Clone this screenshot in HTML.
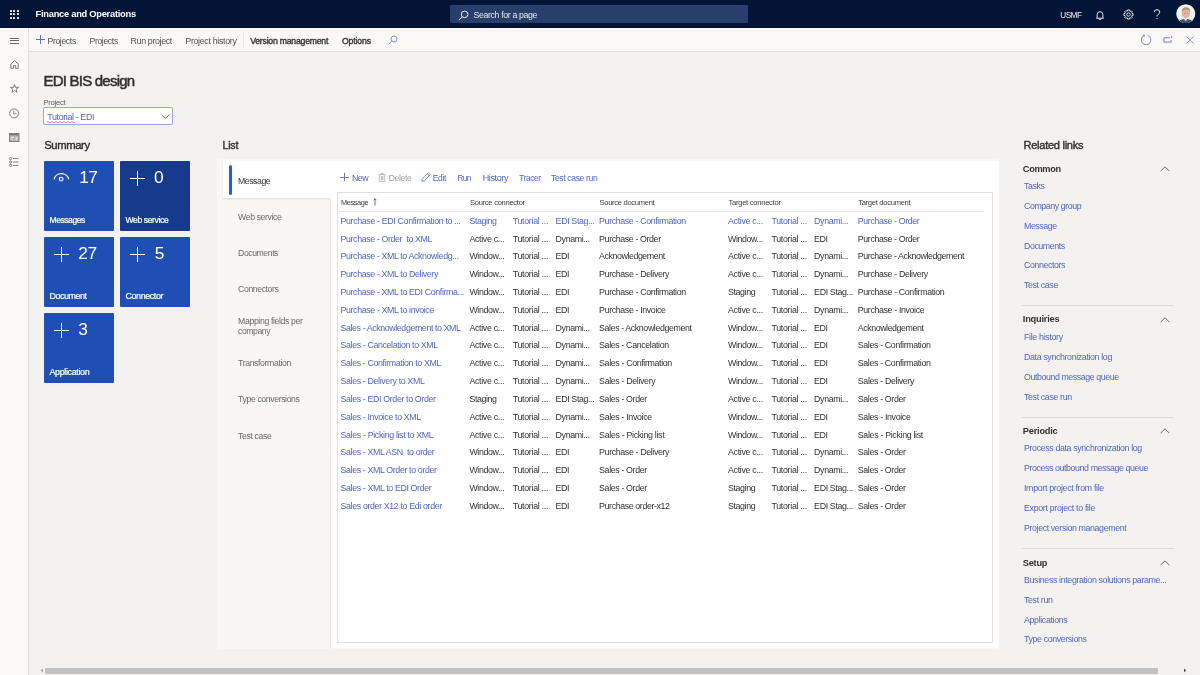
<!DOCTYPE html>
<html><head><meta charset="utf-8"><title>EDI BIS design</title>
<style>
html,body{margin:0;padding:0;width:1200px;height:675px;overflow:hidden;background:#f3f2f1;}
body{position:relative;font-family:"Liberation Sans",sans-serif;}
.t{position:absolute;white-space:nowrap;line-height:1;}
#w{position:absolute;left:0;top:0;width:1200px;height:675px;overflow:hidden;will-change:transform;}
.r{position:absolute;}
</style></head><body>
<div id="w">
<div class="r" style="left:0px;top:0px;width:1200px;height:28px;background:#021536;"></div>
<div class="r" style="left:9.8px;top:9.8px;width:2.2px;height:2.2px;background:#ffffff;border-radius:0.4px;"></div>
<div class="r" style="left:9.8px;top:13.200000000000001px;width:2.2px;height:2.2px;background:#ffffff;border-radius:0.4px;"></div>
<div class="r" style="left:9.8px;top:16.6px;width:2.2px;height:2.2px;background:#ffffff;border-radius:0.4px;"></div>
<div class="r" style="left:13.200000000000001px;top:9.8px;width:2.2px;height:2.2px;background:#ffffff;border-radius:0.4px;"></div>
<div class="r" style="left:13.200000000000001px;top:13.200000000000001px;width:2.2px;height:2.2px;background:#ffffff;border-radius:0.4px;"></div>
<div class="r" style="left:13.200000000000001px;top:16.6px;width:2.2px;height:2.2px;background:#ffffff;border-radius:0.4px;"></div>
<div class="r" style="left:16.6px;top:9.8px;width:2.2px;height:2.2px;background:#ffffff;border-radius:0.4px;"></div>
<div class="r" style="left:16.6px;top:13.200000000000001px;width:2.2px;height:2.2px;background:#ffffff;border-radius:0.4px;"></div>
<div class="r" style="left:16.6px;top:16.6px;width:2.2px;height:2.2px;background:#ffffff;border-radius:0.4px;"></div>
<div class="t" style="left:35.60px;top:10px;font-size:9.328px;color:#ffffff;font-weight:700;letter-spacing:-0.267px;">Finance and Operations</div>
<div class="r" style="left:450px;top:5px;width:298px;height:18px;background:#283f6b;border-radius:1px;"></div>
<svg class="r" style="left:458px;top:9.5px" width="11" height="11" viewBox="0 0 11 11"><circle cx="6.6" cy="4.4" r="3.3" fill="none" stroke="#e8edf5" stroke-width="1"/><line x1="4.2" y1="6.8" x2="0.8" y2="10.2" stroke="#e8edf5" stroke-width="1"/></svg>
<div class="t" style="left:473.50px;top:11px;font-size:8.800px;color:#e3e8f0;font-weight:400;letter-spacing:-0.372px;">Search for a page</div>
<div class="t" style="left:1060.30px;top:12px;font-size:8.195px;color:#f0f2f6;font-weight:400;letter-spacing:-0.531px;">USMF</div>
<svg class="r" style="left:1095px;top:9.5px" width="10" height="10" viewBox="0 0 10 10"><path d="M2.2 7.3 V4.5 A2.8 2.8 0 0 1 7.8 4.5 V7.3 L8.6 8.2 H1.4 Z" fill="none" stroke="#fff" stroke-width="0.9" stroke-linejoin="round"/><path d="M4 8.8 A1 1 0 0 0 6 8.8" fill="none" stroke="#fff" stroke-width="0.9"/></svg>
<svg class="r" style="left:1123px;top:8.8px" width="11" height="11" viewBox="0 0 11 11"><circle cx="5.5" cy="5.5" r="1.7" fill="none" stroke="#fff" stroke-width="0.85"/><path d="M8.94 4.45 L10.12 4.64 L10.12 6.36 L8.94 6.55 L8.68 7.19 L9.37 8.16 L8.16 9.37 L7.19 8.68 L6.55 8.94 L6.36 10.12 L4.64 10.12 L4.45 8.94 L3.81 8.68 L2.84 9.37 L1.63 8.16 L2.32 7.19 L2.06 6.55 L0.88 6.36 L0.88 4.64 L2.06 4.45 L2.32 3.81 L1.63 2.84 L2.84 1.63 L3.81 2.32 L4.45 2.06 L4.64 0.88 L6.36 0.88 L6.55 2.06 L7.19 2.32 L8.16 1.63 L9.37 2.84 L8.68 3.81 Z" fill="none" stroke="#fff" stroke-width="0.85" stroke-linejoin="round"/></svg>
<svg class="r" style="left:1153px;top:9px" width="8" height="11" viewBox="0 0 8 11"><path d="M1.2 3.2 Q1.2 0.7 4 0.7 Q6.8 0.7 6.8 3.1 Q6.8 4.6 5 5.4 Q4 5.9 4 7.4" fill="none" stroke="#fff" stroke-width="0.9"/><circle cx="4" cy="9.6" r="0.6" fill="#fff"/></svg>
<svg class="r" style="left:1176px;top:3.5px" width="19.5" height="19.5" viewBox="0 0 20 20"><defs><clipPath id="av"><circle cx="10" cy="10" r="9.8"/></clipPath></defs><circle cx="10" cy="10" r="9.8" fill="#f2f2f2"/><g clip-path="url(#av)"><path d="M2 20 Q3 15.5 10 15 Q17 15.5 18 20Z" fill="#3d4d6e"/><path d="M8.2 15.2 L10 18 L11.8 15.2Z" fill="#ffffff"/><ellipse cx="10.2" cy="9.3" rx="4.3" ry="5.2" fill="#e2b49c"/><path d="M5.8 8.2 Q5.8 3.2 10.2 3.3 Q14.6 3.2 14.6 8.2 Q13.5 5.6 10.2 5.8 Q7 5.6 5.8 8.2Z" fill="#b89064"/><ellipse cx="8.6" cy="9.6" rx="0.5" ry="0.4" fill="#7a5a4a"/><ellipse cx="11.8" cy="9.6" rx="0.5" ry="0.4" fill="#7a5a4a"/></g></svg>
<div class="r" style="left:29px;top:28px;width:1171px;height:23px;background:#faf9f8;"></div>
<div class="r" style="left:29px;top:51px;width:1171px;height:1px;background:#e1dfdd;"></div>
<div class="r" style="left:35.5px;top:39.2px;width:9.2px;height:0.8px;background:#5d6fc8;"></div>
<div class="r" style="left:39.7px;top:35px;width:0.8px;height:9.2px;background:#5d6fc8;"></div>
<div class="t" style="left:47.50px;top:37px;font-size:8.635px;color:#4f4d4b;font-weight:400;letter-spacing:-0.352px;">Projects</div>
<div class="t" style="left:89.50px;top:37px;font-size:8.635px;color:#4f4d4b;font-weight:400;letter-spacing:-0.352px;">Projects</div>
<div class="t" style="left:130.50px;top:37px;font-size:8.910px;color:#4f4d4b;font-weight:400;letter-spacing:-0.378px;">Run project</div>
<div class="t" style="left:185.30px;top:37px;font-size:8.910px;color:#4f4d4b;font-weight:400;letter-spacing:-0.344px;">Project history</div>
<div class="r" style="left:243px;top:31px;width:1px;height:17px;background:#edebe9;"></div>
<div class="t" style="left:250.20px;top:37px;font-size:8.662px;color:#323130;font-weight:400;letter-spacing:-0.214px;-webkit-text-stroke:0.35px #323130;">Version management</div>
<div class="t" style="left:342.00px;top:37px;font-size:8.652px;color:#323130;font-weight:400;letter-spacing:-0.129px;-webkit-text-stroke:0.35px #323130;">Options</div>
<svg class="r" style="left:387.5px;top:34.5px" width="10" height="10" viewBox="0 0 10 10"><circle cx="6" cy="4" r="3" fill="none" stroke="#7580c8" stroke-width="0.85"/><line x1="3.8" y1="6.2" x2="0.7" y2="9.3" stroke="#7580c8" stroke-width="0.85"/></svg>
<svg class="r" style="left:1140px;top:33.5px" width="12" height="12" viewBox="0 0 12 12"><path d="M4.3 1.4 A4.8 4.8 0 1 0 7.6 1.3" fill="none" stroke="#6a72b4" stroke-width="0.85"/><path d="M2.7 0.9 L4.4 1.3 L4.0 3.0" fill="none" stroke="#6a72b4" stroke-width="0.85"/></svg>
<svg class="r" style="left:1162.5px;top:35.5px" width="10" height="7" viewBox="0 0 10 7"><path d="M6.8 1.8 H0.9 V6.1 H8.1 V4" fill="none" stroke="#6a72b4" stroke-width="0.9"/><circle cx="8.6" cy="1.1" r="0.8" fill="#6a72b4"/></svg>
<svg class="r" style="left:1185.5px;top:35.8px" width="8" height="8" viewBox="0 0 8 8"><path d="M0.5 0.5 L7.5 7.5 M7.5 0.5 L0.5 7.5" fill="none" stroke="#6a72b4" stroke-width="0.8"/></svg>
<div class="r" style="left:0px;top:28px;width:28px;height:647px;background:#faf9f8;"></div>
<div class="r" style="left:28px;top:28px;width:1px;height:647px;background:#e1dfdd;"></div>
<div class="r" style="left:9.5px;top:37.6px;width:9.5px;height:0.8px;background:#6b6967;"></div>
<div class="r" style="left:9.5px;top:40.2px;width:9.5px;height:0.8px;background:#6b6967;"></div>
<div class="r" style="left:9.5px;top:42.8px;width:9.5px;height:0.8px;background:#6b6967;"></div>
<svg class="r" style="left:9.5px;top:59.5px" width="9" height="9" viewBox="0 0 9 9"><path d="M0.8 4 L4.5 0.7 L8.2 4 V8.3 H5.6 V5.6 H3.4 V8.3 H0.8 Z" fill="none" stroke="#6b6967" stroke-width="0.85" stroke-linejoin="round"/></svg>
<svg class="r" style="left:9.5px;top:84px" width="9" height="9" viewBox="0 0 9 9"><path d="M4.5 0.5 L5.5 3.3 L8.5 3.4 L6.1 5.2 L7 8.3 L4.5 6.5 L2 8.3 L2.9 5.2 L0.5 3.4 L3.5 3.3 Z" fill="none" stroke="#6b6967" stroke-width="0.85" stroke-linejoin="round"/></svg>
<svg class="r" style="left:9px;top:107.5px" width="11" height="11" viewBox="0 0 11 11"><circle cx="5.2" cy="5.4" r="4.5" fill="none" stroke="#6b6967" stroke-width="0.85"/><path d="M4.8 2.8 V5.8 H7.3" fill="none" stroke="#6b6967" stroke-width="0.85"/></svg>
<svg class="r" style="left:9px;top:133px" width="10.5" height="9" viewBox="0 0 10.5 9"><rect x="0.5" y="0.5" width="9.5" height="8" fill="#b4b2b0" stroke="#7f7d7b" stroke-width="0.9"/><rect x="0.5" y="0.5" width="9.5" height="1.8" fill="#7a7876"/><rect x="2" y="3.8" width="3" height="1.2" fill="#e8e6e4"/><rect x="2" y="5.8" width="2" height="1" fill="#e8e6e4"/><rect x="6.5" y="3.8" width="2" height="3.5" fill="#e8e6e4"/></svg>
<svg class="r" style="left:9px;top:157px" width="10" height="10" viewBox="0 0 10 10"><circle cx="1.6" cy="1.6" r="1.1" fill="none" stroke="#6b6967" stroke-width="0.8"/><circle cx="1.6" cy="5" r="1.1" fill="none" stroke="#6b6967" stroke-width="0.8"/><circle cx="1.6" cy="8.4" r="1.1" fill="none" stroke="#6b6967" stroke-width="0.8"/><path d="M4 1.6 H9.5 M4 5 H9.5 M4 8.4 H9.5" stroke="#6b6967" stroke-width="0.8"/></svg>
<div class="r" style="left:29px;top:52px;width:1171px;height:623px;background:#f3f2f1;"></div>
<div class="t" style="left:43.50px;top:73px;font-size:15.008px;color:#323130;font-weight:400;letter-spacing:-0.779px;-webkit-text-stroke:0.5px #323130;">EDI BIS design</div>
<div class="t" style="left:43.50px;top:99px;font-size:7.700px;color:#605e5c;font-weight:400;letter-spacing:-0.306px;">Project</div>
<div class="r" style="left:43px;top:107px;width:130px;height:17.5px;background:#ffffff;box-sizing:border-box;border:1px solid #93a8da;border-radius:2px;"></div>
<div class="t" style="left:47.25px;top:113px;font-size:8.960px;color:#5066ba;font-weight:400;letter-spacing:-0.398px;">Tutorial - EDI</div>
<svg class="r" style="left:47px;top:121px" width="28" height="2" viewBox="0 0 28 2"><path d="M0 1.2 Q1 0 2 1.2 T4 1.2 T6 1.2 T8 1.2 T10 1.2 T12 1.2 T14 1.2 T16 1.2 T18 1.2 T20 1.2 T22 1.2 T24 1.2 T26 1.2 T28 1.2" fill="none" stroke="#e05050" stroke-width="0.7"/></svg>
<svg class="r" style="left:160.8px;top:114px" width="9" height="5" viewBox="0 0 9 5"><path d="M0.5 0.6 L4.5 4.4 L8.5 0.6" fill="none" stroke="#605e5c" stroke-width="0.9"/></svg>
<div class="t" style="left:44.20px;top:140px;font-size:11.289px;color:#323130;font-weight:400;letter-spacing:-0.382px;-webkit-text-stroke:0.4px #323130;">Summary</div>
<div class="r" style="left:44px;top:161px;width:70px;height:70px;background:#1f4fb4;border-radius:1px;"></div>
<svg class="r" style="left:53px;top:171.2px" width="17" height="11" viewBox="0 0 17 11"><path d="M1.2 7.9 A7.3 6.3 0 0 1 15.6 7.9" fill="none" stroke="#fff" stroke-width="1.15" stroke-linecap="round"/><circle cx="8.1" cy="8.1" r="1.85" fill="none" stroke="#fff" stroke-width="1.15"/></svg>
<div class="t" style="left:79.20px;top:169px;font-size:17.325px;color:#ffffff;font-weight:400;letter-spacing:-0.453px;">17</div>
<div class="t" style="left:49.50px;top:216px;font-size:8.525px;color:#ffffff;font-weight:400;letter-spacing:-0.436px;-webkit-text-stroke:0.2px #ffffff;">Messages</div>
<div class="r" style="left:120px;top:161px;width:70px;height:70px;background:#163b8b;border-radius:1px;"></div>
<div class="r" style="left:130px;top:178.3px;width:15px;height:1.1px;background:#ffffff;"></div>
<div class="r" style="left:136.95px;top:170.5px;width:1.1px;height:15.5px;background:#ffffff;"></div>
<div class="t" style="left:153.90px;top:169px;font-size:17.325px;color:#ffffff;font-weight:400;letter-spacing:-0.453px;">0</div>
<div class="t" style="left:125.50px;top:216px;font-size:8.580px;color:#ffffff;font-weight:400;letter-spacing:-0.389px;-webkit-text-stroke:0.2px #ffffff;">Web service</div>
<div class="r" style="left:44px;top:237px;width:70px;height:70px;background:#1f4fb4;border-radius:1px;"></div>
<div class="r" style="left:54px;top:254.3px;width:15px;height:1.1px;background:#ffffff;"></div>
<div class="r" style="left:60.95px;top:246.5px;width:1.1px;height:15.5px;background:#ffffff;"></div>
<div class="t" style="left:78.30px;top:245px;font-size:17.325px;color:#ffffff;font-weight:400;letter-spacing:-0.453px;">27</div>
<div class="t" style="left:49.50px;top:292px;font-size:8.965px;color:#ffffff;font-weight:400;letter-spacing:-0.473px;-webkit-text-stroke:0.2px #ffffff;">Document</div>
<div class="r" style="left:120px;top:237px;width:70px;height:70px;background:#1f4fb4;border-radius:1px;"></div>
<div class="r" style="left:130px;top:254.3px;width:15px;height:1.1px;background:#ffffff;"></div>
<div class="r" style="left:136.95px;top:246.5px;width:1.1px;height:15.5px;background:#ffffff;"></div>
<div class="t" style="left:154.80px;top:245px;font-size:17.325px;color:#ffffff;font-weight:400;letter-spacing:-0.453px;">5</div>
<div class="t" style="left:125.50px;top:292px;font-size:8.965px;color:#ffffff;font-weight:400;letter-spacing:-0.424px;-webkit-text-stroke:0.2px #ffffff;">Connector</div>
<div class="r" style="left:44px;top:313px;width:70px;height:70px;background:#1f4fb4;border-radius:1px;"></div>
<div class="r" style="left:54px;top:330.3px;width:15px;height:1.1px;background:#ffffff;"></div>
<div class="r" style="left:60.95px;top:322.5px;width:1.1px;height:15.5px;background:#ffffff;"></div>
<div class="t" style="left:78.30px;top:321px;font-size:17.325px;color:#ffffff;font-weight:400;letter-spacing:-0.453px;">3</div>
<div class="t" style="left:49.50px;top:368px;font-size:8.965px;color:#ffffff;font-weight:400;letter-spacing:-0.369px;-webkit-text-stroke:0.2px #ffffff;">Application</div>
<div class="t" style="left:222.60px;top:140px;font-size:10.600px;color:#323130;font-weight:400;letter-spacing:-0.234px;-webkit-text-stroke:0.4px #323130;">List</div>
<div class="r" style="left:217px;top:159px;width:782px;height:490px;background:#f8f7f6;"></div>
<div class="r" style="left:223px;top:161px;width:108px;height:37px;background:#ffffff;box-shadow:0 1px 1.5px rgba(0,0,0,0.12);"></div>
<div class="r" style="left:331px;top:161px;width:668px;height:487px;background:#ffffff;"></div>
<div class="r" style="left:330px;top:198px;width:1px;height:451px;background:#e9e8e6;"></div>
<div class="r" style="left:229px;top:165px;width:3.2px;height:30px;background:#2160d0;border-radius:1.6px;"></div>
<div class="t" style="left:238.10px;top:177px;font-size:8.690px;color:#323130;font-weight:400;letter-spacing:-0.451px;">Message</div>
<div class="t" style="left:238.10px;top:213px;font-size:8.690px;color:#6b6967;font-weight:400;letter-spacing:-0.389px;">Web service</div>
<div class="t" style="left:238.10px;top:249px;font-size:8.690px;color:#6b6967;font-weight:400;letter-spacing:-0.438px;">Documents</div>
<div class="t" style="left:238.10px;top:285px;font-size:8.690px;color:#6b6967;font-weight:400;letter-spacing:-0.400px;">Connectors</div>
<div class="t" style="left:238.10px;top:359px;font-size:8.690px;color:#6b6967;font-weight:400;letter-spacing:-0.373px;">Transformation</div>
<div class="t" style="left:238.10px;top:395px;font-size:8.690px;color:#6b6967;font-weight:400;letter-spacing:-0.380px;">Type conversions</div>
<div class="t" style="left:238.10px;top:432px;font-size:8.690px;color:#6b6967;font-weight:400;letter-spacing:-0.366px;">Test case</div>
<div class="t" style="left:238.10px;top:317px;font-size:8.690px;color:#6b6967;font-weight:400;letter-spacing:-0.355px;">Mapping fields per</div>
<div class="t" style="left:238.10px;top:327px;font-size:8.690px;color:#6b6967;font-weight:400;letter-spacing:-0.451px;">company</div>
<div class="r" style="left:340.3px;top:176.6px;width:8.4px;height:0.8px;background:#6f78c0;"></div>
<div class="r" style="left:344.1px;top:172.6px;width:0.8px;height:8.6px;background:#6f78c0;"></div>
<div class="t" style="left:352.00px;top:174px;font-size:8.800px;color:#5066ba;font-weight:400;letter-spacing:-0.531px;">New</div>
<svg class="r" style="left:377.5px;top:172.5px" width="8" height="9" viewBox="0 0 8 9"><path d="M1.3 1.8 V8.4 H6.7 V1.8 M0.4 1.5 H7.6 M2.8 1.4 V0.5 H5.2 V1.4" fill="none" stroke="#b5b3b1" stroke-width="0.8"/><rect x="2.6" y="3" width="2.8" height="4.2" fill="#c8c6c4"/></svg>
<div class="t" style="left:388.70px;top:174px;font-size:8.690px;color:#a19f9d;font-weight:400;letter-spacing:-0.378px;">Delete</div>
<svg class="r" style="left:420.5px;top:172px" width="10" height="10" viewBox="0 0 10 10"><path d="M0.8 9.2 L1.3 6.6 L7.2 0.7 L9.3 2.8 L3.4 8.7 Z M6.2 1.7 L8.3 3.8" fill="none" stroke="#5d6fc8" stroke-width="0.8" stroke-linejoin="round"/></svg>
<div class="t" style="left:432.70px;top:174px;font-size:8.525px;color:#5066ba;font-weight:400;letter-spacing:-0.332px;">Edit</div>
<div class="t" style="left:457.50px;top:175px;font-size:8.176px;color:#5066ba;font-weight:400;letter-spacing:-0.526px;">Run</div>
<div class="t" style="left:482.70px;top:174px;font-size:9.020px;color:#5066ba;font-weight:400;letter-spacing:-0.368px;">History</div>
<div class="t" style="left:519.30px;top:174px;font-size:8.400px;color:#5066ba;font-weight:400;letter-spacing:-0.417px;">Tracer</div>
<div class="t" style="left:551.00px;top:174px;font-size:8.580px;color:#5066ba;font-weight:400;letter-spacing:-0.358px;">Test case run</div>
<div class="r" style="left:337px;top:192px;width:656px;height:451px;background:#ffffff;box-sizing:border-box;border:1px solid #e1dfdd;"></div>
<div class="r" style="left:338px;top:211px;width:646px;height:1px;background:#e6e4e2;"></div>
<div class="t" style="left:341.00px;top:199px;font-size:7.370px;color:#3b3a39;font-weight:400;letter-spacing:-0.391px;">Message</div>
<svg class="r" style="left:372.5px;top:197.5px" width="4" height="8" viewBox="0 0 4 8"><path d="M2 0.8 V7.5 M0.6 2.2 L2 0.8 L3.4 2.2" fill="none" stroke="#323130" stroke-width="0.7"/></svg>
<div class="t" style="left:470.00px;top:199px;font-size:7.560px;color:#3b3a39;font-weight:400;letter-spacing:-0.268px;">Source connector</div>
<div class="t" style="left:599.50px;top:199px;font-size:7.560px;color:#3b3a39;font-weight:400;letter-spacing:-0.285px;">Source document</div>
<div class="t" style="left:728.50px;top:199px;font-size:7.560px;color:#3b3a39;font-weight:400;letter-spacing:-0.254px;">Target connector</div>
<div class="t" style="left:858.20px;top:199px;font-size:7.560px;color:#3b3a39;font-weight:400;letter-spacing:-0.271px;">Target document</div>
<div class="t" style="left:340.50px;top:217px;font-size:8.844px;color:#5066ba;font-weight:400;letter-spacing:-0.350px;">Purchase - EDI Confirmation to ...</div>
<div class="t" style="left:469.40px;top:217px;font-size:8.844px;color:#5066ba;font-weight:400;letter-spacing:-0.386px;">Staging</div>
<div class="t" style="left:512.70px;top:217px;font-size:8.844px;color:#5066ba;font-weight:400;letter-spacing:-0.292px;">Tutorial ...</div>
<div class="t" style="left:555.60px;top:217px;font-size:8.844px;color:#5066ba;font-weight:400;letter-spacing:-0.351px;">EDI Stag...</div>
<div class="t" style="left:599.10px;top:217px;font-size:8.844px;color:#5066ba;font-weight:400;letter-spacing:-0.373px;">Purchase - Confirmation</div>
<div class="t" style="left:728.00px;top:217px;font-size:8.844px;color:#5066ba;font-weight:400;letter-spacing:-0.314px;">Active c...</div>
<div class="t" style="left:771.40px;top:217px;font-size:8.844px;color:#5066ba;font-weight:400;letter-spacing:-0.292px;">Tutorial ...</div>
<div class="t" style="left:814.10px;top:217px;font-size:8.844px;color:#5066ba;font-weight:400;letter-spacing:-0.375px;">Dynami...</div>
<div class="t" style="left:857.80px;top:217px;font-size:8.844px;color:#5066ba;font-weight:400;letter-spacing:-0.382px;">Purchase - Order</div>
<div class="t" style="left:340.50px;top:235px;font-size:8.844px;color:#5066ba;font-weight:400;letter-spacing:-0.378px;">Purchase - Order&nbsp; to XML</div>
<div class="t" style="left:469.40px;top:235px;font-size:8.844px;color:#323130;font-weight:400;letter-spacing:-0.314px;">Active c...</div>
<div class="t" style="left:512.70px;top:235px;font-size:8.844px;color:#323130;font-weight:400;letter-spacing:-0.292px;">Tutorial ...</div>
<div class="t" style="left:555.60px;top:235px;font-size:8.844px;color:#323130;font-weight:400;letter-spacing:-0.375px;">Dynami...</div>
<div class="t" style="left:599.10px;top:235px;font-size:8.844px;color:#323130;font-weight:400;letter-spacing:-0.382px;">Purchase - Order</div>
<div class="t" style="left:728.00px;top:235px;font-size:8.844px;color:#323130;font-weight:400;letter-spacing:-0.384px;">Window...</div>
<div class="t" style="left:771.40px;top:235px;font-size:8.844px;color:#323130;font-weight:400;letter-spacing:-0.292px;">Tutorial ...</div>
<div class="t" style="left:814.10px;top:235px;font-size:8.844px;color:#323130;font-weight:400;letter-spacing:-0.443px;">EDI</div>
<div class="t" style="left:857.80px;top:235px;font-size:8.844px;color:#323130;font-weight:400;letter-spacing:-0.382px;">Purchase - Order</div>
<div class="t" style="left:340.50px;top:252px;font-size:8.844px;color:#5066ba;font-weight:400;letter-spacing:-0.378px;">Purchase - XML to Acknowledg...</div>
<div class="t" style="left:469.40px;top:252px;font-size:8.844px;color:#323130;font-weight:400;letter-spacing:-0.384px;">Window...</div>
<div class="t" style="left:512.70px;top:252px;font-size:8.844px;color:#323130;font-weight:400;letter-spacing:-0.292px;">Tutorial ...</div>
<div class="t" style="left:555.60px;top:252px;font-size:8.844px;color:#323130;font-weight:400;letter-spacing:-0.443px;">EDI</div>
<div class="t" style="left:599.10px;top:252px;font-size:8.844px;color:#323130;font-weight:400;letter-spacing:-0.433px;">Acknowledgement</div>
<div class="t" style="left:728.00px;top:252px;font-size:8.844px;color:#323130;font-weight:400;letter-spacing:-0.314px;">Active c...</div>
<div class="t" style="left:771.40px;top:252px;font-size:8.844px;color:#323130;font-weight:400;letter-spacing:-0.292px;">Tutorial ...</div>
<div class="t" style="left:814.10px;top:252px;font-size:8.844px;color:#323130;font-weight:400;letter-spacing:-0.375px;">Dynami...</div>
<div class="t" style="left:857.80px;top:252px;font-size:8.844px;color:#323130;font-weight:400;letter-spacing:-0.406px;">Purchase - Acknowledgement</div>
<div class="t" style="left:340.50px;top:270px;font-size:8.844px;color:#5066ba;font-weight:400;letter-spacing:-0.372px;">Purchase - XML to Delivery</div>
<div class="t" style="left:469.40px;top:270px;font-size:8.844px;color:#323130;font-weight:400;letter-spacing:-0.384px;">Window...</div>
<div class="t" style="left:512.70px;top:270px;font-size:8.844px;color:#323130;font-weight:400;letter-spacing:-0.292px;">Tutorial ...</div>
<div class="t" style="left:555.60px;top:270px;font-size:8.844px;color:#323130;font-weight:400;letter-spacing:-0.443px;">EDI</div>
<div class="t" style="left:599.10px;top:270px;font-size:8.844px;color:#323130;font-weight:400;letter-spacing:-0.366px;">Purchase - Delivery</div>
<div class="t" style="left:728.00px;top:270px;font-size:8.844px;color:#323130;font-weight:400;letter-spacing:-0.314px;">Active c...</div>
<div class="t" style="left:771.40px;top:270px;font-size:8.844px;color:#323130;font-weight:400;letter-spacing:-0.292px;">Tutorial ...</div>
<div class="t" style="left:814.10px;top:270px;font-size:8.844px;color:#323130;font-weight:400;letter-spacing:-0.375px;">Dynami...</div>
<div class="t" style="left:857.80px;top:270px;font-size:8.844px;color:#323130;font-weight:400;letter-spacing:-0.366px;">Purchase - Delivery</div>
<div class="t" style="left:340.50px;top:288px;font-size:8.844px;color:#5066ba;font-weight:400;letter-spacing:-0.371px;">Purchase - XML to EDI Confirma...</div>
<div class="t" style="left:469.40px;top:288px;font-size:8.844px;color:#323130;font-weight:400;letter-spacing:-0.384px;">Window...</div>
<div class="t" style="left:512.70px;top:288px;font-size:8.844px;color:#323130;font-weight:400;letter-spacing:-0.292px;">Tutorial ...</div>
<div class="t" style="left:555.60px;top:288px;font-size:8.844px;color:#323130;font-weight:400;letter-spacing:-0.443px;">EDI</div>
<div class="t" style="left:599.10px;top:288px;font-size:8.844px;color:#323130;font-weight:400;letter-spacing:-0.373px;">Purchase - Confirmation</div>
<div class="t" style="left:728.00px;top:288px;font-size:8.844px;color:#323130;font-weight:400;letter-spacing:-0.386px;">Staging</div>
<div class="t" style="left:771.40px;top:288px;font-size:8.844px;color:#323130;font-weight:400;letter-spacing:-0.292px;">Tutorial ...</div>
<div class="t" style="left:814.10px;top:288px;font-size:8.844px;color:#323130;font-weight:400;letter-spacing:-0.351px;">EDI Stag...</div>
<div class="t" style="left:857.80px;top:288px;font-size:8.844px;color:#323130;font-weight:400;letter-spacing:-0.373px;">Purchase - Confirmation</div>
<div class="t" style="left:340.50px;top:306px;font-size:8.844px;color:#5066ba;font-weight:400;letter-spacing:-0.371px;">Purchase - XML to invoice</div>
<div class="t" style="left:469.40px;top:306px;font-size:8.844px;color:#323130;font-weight:400;letter-spacing:-0.384px;">Window...</div>
<div class="t" style="left:512.70px;top:306px;font-size:8.844px;color:#323130;font-weight:400;letter-spacing:-0.292px;">Tutorial ...</div>
<div class="t" style="left:555.60px;top:306px;font-size:8.844px;color:#323130;font-weight:400;letter-spacing:-0.443px;">EDI</div>
<div class="t" style="left:599.10px;top:306px;font-size:8.844px;color:#323130;font-weight:400;letter-spacing:-0.367px;">Purchase - Invoice</div>
<div class="t" style="left:728.00px;top:306px;font-size:8.844px;color:#323130;font-weight:400;letter-spacing:-0.314px;">Active c...</div>
<div class="t" style="left:771.40px;top:306px;font-size:8.844px;color:#323130;font-weight:400;letter-spacing:-0.292px;">Tutorial ...</div>
<div class="t" style="left:814.10px;top:306px;font-size:8.844px;color:#323130;font-weight:400;letter-spacing:-0.375px;">Dynami...</div>
<div class="t" style="left:857.80px;top:306px;font-size:8.844px;color:#323130;font-weight:400;letter-spacing:-0.367px;">Purchase - Invoice</div>
<div class="t" style="left:340.50px;top:324px;font-size:8.844px;color:#5066ba;font-weight:400;letter-spacing:-0.397px;">Sales - Acknowledgement to XML</div>
<div class="t" style="left:469.40px;top:324px;font-size:8.844px;color:#323130;font-weight:400;letter-spacing:-0.314px;">Active c...</div>
<div class="t" style="left:512.70px;top:324px;font-size:8.844px;color:#323130;font-weight:400;letter-spacing:-0.292px;">Tutorial ...</div>
<div class="t" style="left:555.60px;top:324px;font-size:8.844px;color:#323130;font-weight:400;letter-spacing:-0.375px;">Dynami...</div>
<div class="t" style="left:599.10px;top:324px;font-size:8.844px;color:#323130;font-weight:400;letter-spacing:-0.399px;">Sales - Acknowledgement</div>
<div class="t" style="left:728.00px;top:324px;font-size:8.844px;color:#323130;font-weight:400;letter-spacing:-0.384px;">Window...</div>
<div class="t" style="left:771.40px;top:324px;font-size:8.844px;color:#323130;font-weight:400;letter-spacing:-0.292px;">Tutorial ...</div>
<div class="t" style="left:814.10px;top:324px;font-size:8.844px;color:#323130;font-weight:400;letter-spacing:-0.443px;">EDI</div>
<div class="t" style="left:857.80px;top:324px;font-size:8.844px;color:#323130;font-weight:400;letter-spacing:-0.433px;">Acknowledgement</div>
<div class="t" style="left:340.50px;top:341px;font-size:8.844px;color:#5066ba;font-weight:400;letter-spacing:-0.371px;">Sales - Cancelation to XML</div>
<div class="t" style="left:469.40px;top:341px;font-size:8.844px;color:#323130;font-weight:400;letter-spacing:-0.314px;">Active c...</div>
<div class="t" style="left:512.70px;top:341px;font-size:8.844px;color:#323130;font-weight:400;letter-spacing:-0.292px;">Tutorial ...</div>
<div class="t" style="left:555.60px;top:341px;font-size:8.844px;color:#323130;font-weight:400;letter-spacing:-0.375px;">Dynami...</div>
<div class="t" style="left:599.10px;top:341px;font-size:8.844px;color:#323130;font-weight:400;letter-spacing:-0.363px;">Sales - Cancelation</div>
<div class="t" style="left:728.00px;top:341px;font-size:8.844px;color:#323130;font-weight:400;letter-spacing:-0.384px;">Window...</div>
<div class="t" style="left:771.40px;top:341px;font-size:8.844px;color:#323130;font-weight:400;letter-spacing:-0.292px;">Tutorial ...</div>
<div class="t" style="left:814.10px;top:341px;font-size:8.844px;color:#323130;font-weight:400;letter-spacing:-0.443px;">EDI</div>
<div class="t" style="left:857.80px;top:341px;font-size:8.844px;color:#323130;font-weight:400;letter-spacing:-0.361px;">Sales - Confirmation</div>
<div class="t" style="left:340.50px;top:359px;font-size:8.844px;color:#5066ba;font-weight:400;letter-spacing:-0.369px;">Sales - Confirmation to XML</div>
<div class="t" style="left:469.40px;top:359px;font-size:8.844px;color:#323130;font-weight:400;letter-spacing:-0.314px;">Active c...</div>
<div class="t" style="left:512.70px;top:359px;font-size:8.844px;color:#323130;font-weight:400;letter-spacing:-0.292px;">Tutorial ...</div>
<div class="t" style="left:555.60px;top:359px;font-size:8.844px;color:#323130;font-weight:400;letter-spacing:-0.375px;">Dynami...</div>
<div class="t" style="left:599.10px;top:359px;font-size:8.844px;color:#323130;font-weight:400;letter-spacing:-0.361px;">Sales - Confirmation</div>
<div class="t" style="left:728.00px;top:359px;font-size:8.844px;color:#323130;font-weight:400;letter-spacing:-0.384px;">Window...</div>
<div class="t" style="left:771.40px;top:359px;font-size:8.844px;color:#323130;font-weight:400;letter-spacing:-0.292px;">Tutorial ...</div>
<div class="t" style="left:814.10px;top:359px;font-size:8.844px;color:#323130;font-weight:400;letter-spacing:-0.443px;">EDI</div>
<div class="t" style="left:857.80px;top:359px;font-size:8.844px;color:#323130;font-weight:400;letter-spacing:-0.361px;">Sales - Confirmation</div>
<div class="t" style="left:340.50px;top:377px;font-size:8.844px;color:#5066ba;font-weight:400;letter-spacing:-0.361px;">Sales - Delivery to XML</div>
<div class="t" style="left:469.40px;top:377px;font-size:8.844px;color:#323130;font-weight:400;letter-spacing:-0.314px;">Active c...</div>
<div class="t" style="left:512.70px;top:377px;font-size:8.844px;color:#323130;font-weight:400;letter-spacing:-0.292px;">Tutorial ...</div>
<div class="t" style="left:555.60px;top:377px;font-size:8.844px;color:#323130;font-weight:400;letter-spacing:-0.375px;">Dynami...</div>
<div class="t" style="left:599.10px;top:377px;font-size:8.844px;color:#323130;font-weight:400;letter-spacing:-0.349px;">Sales - Delivery</div>
<div class="t" style="left:728.00px;top:377px;font-size:8.844px;color:#323130;font-weight:400;letter-spacing:-0.384px;">Window...</div>
<div class="t" style="left:771.40px;top:377px;font-size:8.844px;color:#323130;font-weight:400;letter-spacing:-0.292px;">Tutorial ...</div>
<div class="t" style="left:814.10px;top:377px;font-size:8.844px;color:#323130;font-weight:400;letter-spacing:-0.443px;">EDI</div>
<div class="t" style="left:857.80px;top:377px;font-size:8.844px;color:#323130;font-weight:400;letter-spacing:-0.349px;">Sales - Delivery</div>
<div class="t" style="left:340.50px;top:395px;font-size:8.844px;color:#5066ba;font-weight:400;letter-spacing:-0.362px;">Sales - EDI Order to Order</div>
<div class="t" style="left:469.40px;top:395px;font-size:8.844px;color:#323130;font-weight:400;letter-spacing:-0.386px;">Staging</div>
<div class="t" style="left:512.70px;top:395px;font-size:8.844px;color:#323130;font-weight:400;letter-spacing:-0.292px;">Tutorial ...</div>
<div class="t" style="left:555.60px;top:395px;font-size:8.844px;color:#323130;font-weight:400;letter-spacing:-0.351px;">EDI Stag...</div>
<div class="t" style="left:599.10px;top:395px;font-size:8.844px;color:#323130;font-weight:400;letter-spacing:-0.364px;">Sales - Order</div>
<div class="t" style="left:728.00px;top:395px;font-size:8.844px;color:#323130;font-weight:400;letter-spacing:-0.314px;">Active c...</div>
<div class="t" style="left:771.40px;top:395px;font-size:8.844px;color:#323130;font-weight:400;letter-spacing:-0.292px;">Tutorial ...</div>
<div class="t" style="left:814.10px;top:395px;font-size:8.844px;color:#323130;font-weight:400;letter-spacing:-0.375px;">Dynami...</div>
<div class="t" style="left:857.80px;top:395px;font-size:8.844px;color:#323130;font-weight:400;letter-spacing:-0.364px;">Sales - Order</div>
<div class="t" style="left:340.50px;top:413px;font-size:8.844px;color:#5066ba;font-weight:400;letter-spacing:-0.362px;">Sales - Invoice to XML</div>
<div class="t" style="left:469.40px;top:413px;font-size:8.844px;color:#323130;font-weight:400;letter-spacing:-0.314px;">Active c...</div>
<div class="t" style="left:512.70px;top:413px;font-size:8.844px;color:#323130;font-weight:400;letter-spacing:-0.292px;">Tutorial ...</div>
<div class="t" style="left:555.60px;top:413px;font-size:8.844px;color:#323130;font-weight:400;letter-spacing:-0.375px;">Dynami...</div>
<div class="t" style="left:599.10px;top:413px;font-size:8.844px;color:#323130;font-weight:400;letter-spacing:-0.348px;">Sales - Invoice</div>
<div class="t" style="left:728.00px;top:413px;font-size:8.844px;color:#323130;font-weight:400;letter-spacing:-0.384px;">Window...</div>
<div class="t" style="left:771.40px;top:413px;font-size:8.844px;color:#323130;font-weight:400;letter-spacing:-0.292px;">Tutorial ...</div>
<div class="t" style="left:814.10px;top:413px;font-size:8.844px;color:#323130;font-weight:400;letter-spacing:-0.443px;">EDI</div>
<div class="t" style="left:857.80px;top:413px;font-size:8.844px;color:#323130;font-weight:400;letter-spacing:-0.348px;">Sales - Invoice</div>
<div class="t" style="left:340.50px;top:431px;font-size:8.844px;color:#5066ba;font-weight:400;letter-spacing:-0.341px;">Sales - Picking list to XML</div>
<div class="t" style="left:469.40px;top:431px;font-size:8.844px;color:#323130;font-weight:400;letter-spacing:-0.314px;">Active c...</div>
<div class="t" style="left:512.70px;top:431px;font-size:8.844px;color:#323130;font-weight:400;letter-spacing:-0.292px;">Tutorial ...</div>
<div class="t" style="left:555.60px;top:431px;font-size:8.844px;color:#323130;font-weight:400;letter-spacing:-0.375px;">Dynami...</div>
<div class="t" style="left:599.10px;top:431px;font-size:8.844px;color:#323130;font-weight:400;letter-spacing:-0.323px;">Sales - Picking list</div>
<div class="t" style="left:728.00px;top:431px;font-size:8.844px;color:#323130;font-weight:400;letter-spacing:-0.384px;">Window...</div>
<div class="t" style="left:771.40px;top:431px;font-size:8.844px;color:#323130;font-weight:400;letter-spacing:-0.292px;">Tutorial ...</div>
<div class="t" style="left:814.10px;top:431px;font-size:8.844px;color:#323130;font-weight:400;letter-spacing:-0.443px;">EDI</div>
<div class="t" style="left:857.80px;top:431px;font-size:8.844px;color:#323130;font-weight:400;letter-spacing:-0.323px;">Sales - Picking list</div>
<div class="t" style="left:340.50px;top:448px;font-size:8.844px;color:#5066ba;font-weight:400;letter-spacing:-0.372px;">Sales - XML ASN&nbsp; to order</div>
<div class="t" style="left:469.40px;top:448px;font-size:8.844px;color:#323130;font-weight:400;letter-spacing:-0.384px;">Window...</div>
<div class="t" style="left:512.70px;top:448px;font-size:8.844px;color:#323130;font-weight:400;letter-spacing:-0.292px;">Tutorial ...</div>
<div class="t" style="left:555.60px;top:448px;font-size:8.844px;color:#323130;font-weight:400;letter-spacing:-0.443px;">EDI</div>
<div class="t" style="left:599.10px;top:448px;font-size:8.844px;color:#323130;font-weight:400;letter-spacing:-0.366px;">Purchase - Delivery</div>
<div class="t" style="left:728.00px;top:448px;font-size:8.844px;color:#323130;font-weight:400;letter-spacing:-0.314px;">Active c...</div>
<div class="t" style="left:771.40px;top:448px;font-size:8.844px;color:#323130;font-weight:400;letter-spacing:-0.292px;">Tutorial ...</div>
<div class="t" style="left:814.10px;top:448px;font-size:8.844px;color:#323130;font-weight:400;letter-spacing:-0.375px;">Dynami...</div>
<div class="t" style="left:857.80px;top:448px;font-size:8.844px;color:#323130;font-weight:400;letter-spacing:-0.364px;">Sales - Order</div>
<div class="t" style="left:340.50px;top:466px;font-size:8.844px;color:#5066ba;font-weight:400;letter-spacing:-0.367px;">Sales - XML Order to order</div>
<div class="t" style="left:469.40px;top:466px;font-size:8.844px;color:#323130;font-weight:400;letter-spacing:-0.384px;">Window...</div>
<div class="t" style="left:512.70px;top:466px;font-size:8.844px;color:#323130;font-weight:400;letter-spacing:-0.292px;">Tutorial ...</div>
<div class="t" style="left:555.60px;top:466px;font-size:8.844px;color:#323130;font-weight:400;letter-spacing:-0.443px;">EDI</div>
<div class="t" style="left:599.10px;top:466px;font-size:8.844px;color:#323130;font-weight:400;letter-spacing:-0.364px;">Sales - Order</div>
<div class="t" style="left:728.00px;top:466px;font-size:8.844px;color:#323130;font-weight:400;letter-spacing:-0.314px;">Active c...</div>
<div class="t" style="left:771.40px;top:466px;font-size:8.844px;color:#323130;font-weight:400;letter-spacing:-0.292px;">Tutorial ...</div>
<div class="t" style="left:814.10px;top:466px;font-size:8.844px;color:#323130;font-weight:400;letter-spacing:-0.375px;">Dynami...</div>
<div class="t" style="left:857.80px;top:466px;font-size:8.844px;color:#323130;font-weight:400;letter-spacing:-0.364px;">Sales - Order</div>
<div class="t" style="left:340.50px;top:484px;font-size:8.844px;color:#5066ba;font-weight:400;letter-spacing:-0.375px;">Sales - XML to EDI Order</div>
<div class="t" style="left:469.40px;top:484px;font-size:8.844px;color:#323130;font-weight:400;letter-spacing:-0.384px;">Window...</div>
<div class="t" style="left:512.70px;top:484px;font-size:8.844px;color:#323130;font-weight:400;letter-spacing:-0.292px;">Tutorial ...</div>
<div class="t" style="left:555.60px;top:484px;font-size:8.844px;color:#323130;font-weight:400;letter-spacing:-0.443px;">EDI</div>
<div class="t" style="left:599.10px;top:484px;font-size:8.844px;color:#323130;font-weight:400;letter-spacing:-0.364px;">Sales - Order</div>
<div class="t" style="left:728.00px;top:484px;font-size:8.844px;color:#323130;font-weight:400;letter-spacing:-0.386px;">Staging</div>
<div class="t" style="left:771.40px;top:484px;font-size:8.844px;color:#323130;font-weight:400;letter-spacing:-0.292px;">Tutorial ...</div>
<div class="t" style="left:814.10px;top:484px;font-size:8.844px;color:#323130;font-weight:400;letter-spacing:-0.351px;">EDI Stag...</div>
<div class="t" style="left:857.80px;top:484px;font-size:8.844px;color:#323130;font-weight:400;letter-spacing:-0.364px;">Sales - Order</div>
<div class="t" style="left:340.50px;top:502px;font-size:8.844px;color:#5066ba;font-weight:400;letter-spacing:-0.359px;">Sales order X12 to Edi order</div>
<div class="t" style="left:469.40px;top:502px;font-size:8.844px;color:#323130;font-weight:400;letter-spacing:-0.384px;">Window...</div>
<div class="t" style="left:512.70px;top:502px;font-size:8.844px;color:#323130;font-weight:400;letter-spacing:-0.292px;">Tutorial ...</div>
<div class="t" style="left:555.60px;top:502px;font-size:8.844px;color:#323130;font-weight:400;letter-spacing:-0.443px;">EDI</div>
<div class="t" style="left:599.10px;top:502px;font-size:8.844px;color:#323130;font-weight:400;letter-spacing:-0.388px;">Purchase order-x12</div>
<div class="t" style="left:728.00px;top:502px;font-size:8.844px;color:#323130;font-weight:400;letter-spacing:-0.386px;">Staging</div>
<div class="t" style="left:771.40px;top:502px;font-size:8.844px;color:#323130;font-weight:400;letter-spacing:-0.292px;">Tutorial ...</div>
<div class="t" style="left:814.10px;top:502px;font-size:8.844px;color:#323130;font-weight:400;letter-spacing:-0.351px;">EDI Stag...</div>
<div class="t" style="left:857.80px;top:502px;font-size:8.844px;color:#323130;font-weight:400;letter-spacing:-0.364px;">Sales - Order</div>
<div class="t" style="left:1023.50px;top:140px;font-size:11.077px;color:#323130;font-weight:400;letter-spacing:-0.275px;-webkit-text-stroke:0.4px #323130;">Related links</div>
<div class="t" style="left:1022.80px;top:165px;font-size:9.240px;color:#323130;font-weight:700;letter-spacing:-0.315px;">Common</div>
<svg class="r" style="left:1159.5px;top:166.0px" width="10" height="6" viewBox="0 0 10 6"><path d="M0.6 5.2 L5 0.8 L9.4 5.2" fill="none" stroke="#605e5c" stroke-width="0.9"/></svg>
<div class="t" style="left:1024.00px;top:182px;font-size:8.844px;color:#5066ba;font-weight:400;letter-spacing:-0.409px;">Tasks</div>
<div class="t" style="left:1024.00px;top:202px;font-size:8.844px;color:#5066ba;font-weight:400;letter-spacing:-0.436px;">Company group</div>
<div class="t" style="left:1024.00px;top:222px;font-size:8.844px;color:#5066ba;font-weight:400;letter-spacing:-0.462px;">Message</div>
<div class="t" style="left:1024.00px;top:242px;font-size:8.844px;color:#5066ba;font-weight:400;letter-spacing:-0.448px;">Documents</div>
<div class="t" style="left:1024.00px;top:261px;font-size:8.844px;color:#5066ba;font-weight:400;letter-spacing:-0.408px;">Connectors</div>
<div class="t" style="left:1024.00px;top:281px;font-size:8.844px;color:#5066ba;font-weight:400;letter-spacing:-0.373px;">Test case</div>
<div class="r" style="left:1022px;top:305px;width:152px;height:1px;background:#dcdad8;"></div>
<div class="t" style="left:1022.80px;top:315px;font-size:9.240px;color:#323130;font-weight:700;letter-spacing:-0.201px;">Inquiries</div>
<svg class="r" style="left:1159.5px;top:316.59999999999997px" width="10" height="6" viewBox="0 0 10 6"><path d="M0.6 5.2 L5 0.8 L9.4 5.2" fill="none" stroke="#605e5c" stroke-width="0.9"/></svg>
<div class="t" style="left:1024.00px;top:333px;font-size:8.844px;color:#5066ba;font-weight:400;letter-spacing:-0.322px;">File history</div>
<div class="t" style="left:1024.00px;top:353px;font-size:8.844px;color:#5066ba;font-weight:400;letter-spacing:-0.364px;">Data synchronization log</div>
<div class="t" style="left:1024.00px;top:373px;font-size:8.844px;color:#5066ba;font-weight:400;letter-spacing:-0.427px;">Outbound message queue</div>
<div class="t" style="left:1024.00px;top:393px;font-size:8.844px;color:#5066ba;font-weight:400;letter-spacing:-0.365px;">Test case run</div>
<div class="r" style="left:1022px;top:417px;width:152px;height:1px;background:#dcdad8;"></div>
<div class="t" style="left:1022.80px;top:427px;font-size:9.240px;color:#323130;font-weight:700;letter-spacing:-0.215px;">Periodic</div>
<svg class="r" style="left:1159.5px;top:427.9px" width="10" height="6" viewBox="0 0 10 6"><path d="M0.6 5.2 L5 0.8 L9.4 5.2" fill="none" stroke="#605e5c" stroke-width="0.9"/></svg>
<div class="t" style="left:1024.00px;top:444px;font-size:8.844px;color:#5066ba;font-weight:400;letter-spacing:-0.366px;">Process data synchronization log</div>
<div class="t" style="left:1024.00px;top:464px;font-size:8.844px;color:#5066ba;font-weight:400;letter-spacing:-0.411px;">Process outbound message queue</div>
<div class="t" style="left:1024.00px;top:484px;font-size:8.844px;color:#5066ba;font-weight:400;letter-spacing:-0.331px;">Import project from file</div>
<div class="t" style="left:1024.00px;top:504px;font-size:8.844px;color:#5066ba;font-weight:400;letter-spacing:-0.320px;">Export project to file</div>
<div class="t" style="left:1024.00px;top:524px;font-size:8.844px;color:#5066ba;font-weight:400;letter-spacing:-0.390px;">Project version management</div>
<div class="r" style="left:1022px;top:548px;width:152px;height:1px;background:#dcdad8;"></div>
<div class="t" style="left:1022.80px;top:559px;font-size:9.240px;color:#323130;font-weight:700;letter-spacing:-0.244px;">Setup</div>
<svg class="r" style="left:1159.5px;top:559.6999999999999px" width="10" height="6" viewBox="0 0 10 6"><path d="M0.6 5.2 L5 0.8 L9.4 5.2" fill="none" stroke="#605e5c" stroke-width="0.9"/></svg>
<div class="t" style="left:1024.00px;top:576px;font-size:8.844px;color:#5066ba;font-weight:400;letter-spacing:-0.353px;">Business integration solutions parame...</div>
<div class="t" style="left:1024.00px;top:596px;font-size:8.844px;color:#5066ba;font-weight:400;letter-spacing:-0.354px;">Test run</div>
<div class="t" style="left:1024.00px;top:616px;font-size:8.844px;color:#5066ba;font-weight:400;letter-spacing:-0.358px;">Applications</div>
<div class="t" style="left:1024.00px;top:635px;font-size:8.844px;color:#5066ba;font-weight:400;letter-spacing:-0.388px;">Type conversions</div>
<div class="r" style="left:45px;top:668px;width:1113px;height:6px;background:#c1c1c1;"></div>
<svg class="r" style="left:39.5px;top:668px" width="4" height="5" viewBox="0 0 4 5"><path d="M3 0.5 L0.8 2.5 L3 4.5Z" fill="#a0a0a0"/></svg>
<svg class="r" style="left:1182.5px;top:668px" width="4" height="5" viewBox="0 0 4 5"><path d="M1 0.5 L3.2 2.5 L1 4.5Z" fill="#505050"/></svg>
</div></body></html>
